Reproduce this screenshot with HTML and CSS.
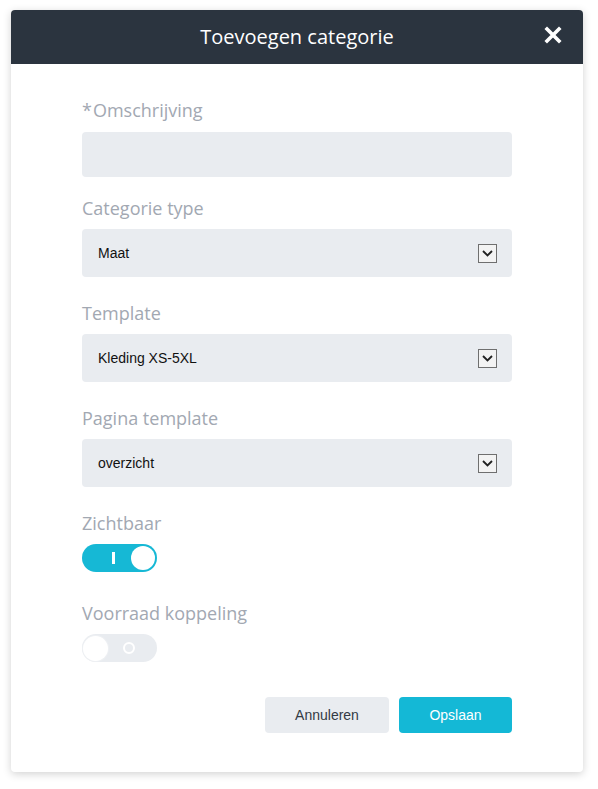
FILE: index.html
```html
<!DOCTYPE html>
<html lang="nl">
<head>
<meta charset="utf-8">
<title>Toevoegen categorie</title>
<link rel="stylesheet" href="styles.css">
</head>
<body>
<div class="modal">
  <div class="modal-header">
    <h1 class="modal-title">Toevoegen categorie</h1>
    <button class="close" aria-label="Sluiten">
      <svg width="18" height="18" viewBox="0 0 18 18"><path d="M3 3 L15 15 M15 3 L3 15" stroke="#fff" stroke-width="3.6" stroke-linecap="square"/></svg>
    </button>
  </div>
  <div class="modal-body">
    <div class="field field-first">
      <label class="label"><span class="req">*</span>Omschrijving</label>
      <div class="input"></div>
    </div>
    <div class="field">
      <label class="label">Categorie type</label>
      <div class="select"><span>Maat</span><span class="arrow"><svg width="11" height="7" viewBox="0 0 11 7"><path d="M1 1 L5.5 5.5 L10 1" fill="none" stroke="#222" stroke-width="1.8"/></svg></span></div>
    </div>
    <div class="field">
      <label class="label">Template</label>
      <div class="select"><span>Kleding XS-5XL</span><span class="arrow"><svg width="11" height="7" viewBox="0 0 11 7"><path d="M1 1 L5.5 5.5 L10 1" fill="none" stroke="#222" stroke-width="1.8"/></svg></span></div>
    </div>
    <div class="field">
      <label class="label">Pagina template</label>
      <div class="select"><span>overzicht</span><span class="arrow"><svg width="11" height="7" viewBox="0 0 11 7"><path d="M1 1 L5.5 5.5 L10 1" fill="none" stroke="#222" stroke-width="1.8"/></svg></span></div>
    </div>
    <div class="field field-toggle">
      <label class="label">Zichtbaar</label>
      <div class="toggle on"><span class="mark-i"></span><span class="knob"></span></div>
    </div>
    <div class="field field-toggle field-last">
      <label class="label">Voorraad koppeling</label>
      <div class="toggle off"><span class="knob"></span><span class="mark-o"></span></div>
    </div>
    <div class="actions">
      <button class="btn btn-cancel">Annuleren</button>
      <button class="btn btn-save">Opslaan</button>
    </div>
  </div>
</div>
</body>
</html>
```
FILE: styles.css
```css
html, body {
  margin: 0;
  padding: 0;
  background: #ffffff;
}
body {
  padding: 10px 15px 17px 11px;
  font-family: "Open Sans", "Liberation Sans", sans-serif;
}
.modal {
  width: 572px;
  background: #fff;
  border-radius: 4px;
  box-shadow: 0 2px 8px rgba(0, 0, 0, 0.18);
  overflow: hidden;
}
.modal-header {
  height: 54px;
  background: #2b343f;
  display: flex;
  align-items: center;
  justify-content: center;
  position: relative;
}
.modal-title {
  margin: 0;
  font-size: 20px;
  font-weight: 400;
  color: #fff;
  line-height: 54px;
}
.close {
  position: absolute;
  right: 21px;
  top: 16px;
  width: 18px;
  height: 18px;
  padding: 0;
  border: 0;
  background: none;
  display: flex;
}
.modal-body {
  padding: 34px 71px 39px 71px;
}
.field {
  display: flex;
  flex-direction: column;
  margin-bottom: 24px;
}
.field-first {
  margin-bottom: 19px;
}
.label {
  font-size: 18px;
  line-height: 24px;
  color: #a2a8b2;
  margin-bottom: 9px;
}
.req {
  margin-right: 1px;
}
.field-first .label {
  margin-bottom: 10px;
}
.input {
  height: 45px;
  background: #e9ecf0;
  border-radius: 4px;
}
.select {
  height: 48px;
  background: #e9ecf0;
  border-radius: 4px;
  display: flex;
  align-items: center;
  justify-content: space-between;
  padding: 0 15px 0 16px;
  font-family: "Liberation Sans", Arial, sans-serif;
  font-size: 14px;
  color: #111;
}
.arrow {
  width: 17px;
  height: 17px;
  border: 1px solid #6f6f6f;
  background: #f3f3f3;
  display: flex;
  align-items: center;
  justify-content: center;
}
.field-toggle {
  margin-bottom: 29px;
}
.field-last {
  margin-bottom: 35px;
}
.toggle {
  width: 75px;
  height: 28px;
  border-radius: 14px;
  box-sizing: border-box;
  display: flex;
  align-items: center;
  position: relative;
}
.toggle.on {
  background: #16b8d5;
  justify-content: flex-end;
  padding-right: 2px;
}
.toggle.off {
  background: #e9ecf0;
  padding-left: 1px;
}
.knob {
  width: 24px;
  height: 24px;
  border-radius: 50%;
  background: #fff;
}
.toggle.off .knob {
  width: 25px;
  height: 25px;
  box-shadow: 0 0 0 1px #eef0f3;
}
.mark-i {
  position: absolute;
  left: 30px;
  top: 8px;
  width: 3px;
  height: 12px;
  background: #fff;
}
.mark-o {
  position: absolute;
  left: 41px;
  top: 8px;
  width: 8px;
  height: 8px;
  border: 2.5px solid #fff;
  border-radius: 50%;
}
.actions {
  display: flex;
  justify-content: flex-end;
  gap: 10px;
}
.btn {
  height: 36px;
  border: 0;
  border-radius: 4px;
  font-family: "Liberation Sans", Arial, sans-serif;
  font-size: 14px;
  padding: 0;
}
.btn-cancel {
  width: 124px;
  background: #e9ecf0;
  color: #333a44;
}
.btn-save {
  width: 113px;
  background: #14b8d6;
  color: #fff;
}
```
